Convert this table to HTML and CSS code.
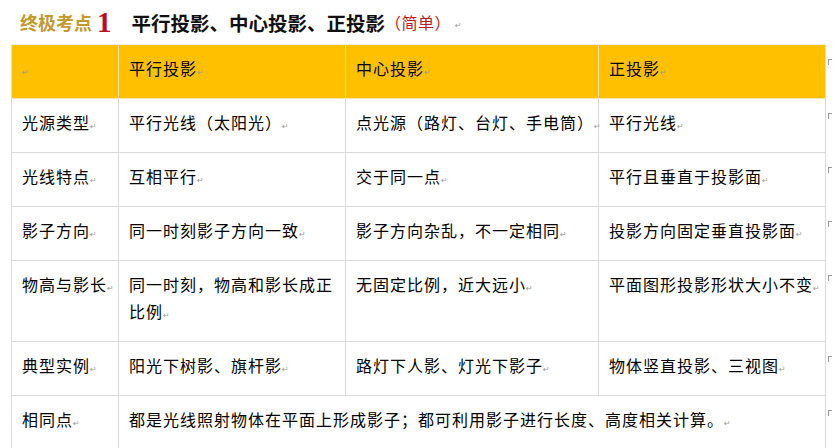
FILE: index.html
```html
<!DOCTYPE html>
<html lang="zh-CN">
<head>
<meta charset="utf-8">
<title>终极考点1 平行投影、中心投影、正投影</title>
<link rel="stylesheet" href="styles.css">
</head>
<body>
<div class="page">
  <h1 class="title">
    <span class="tag">终极考点</span><span class="num">1</span>
    <span class="main">平行投影、中心投影、正投影</span><span class="level">（简单）</span><span class="pm">↵</span>
  </h1>
  <table class="grid">
    <colgroup>
      <col class="c1"><col class="c2"><col class="c3"><col class="c4"><col class="c5">
    </colgroup>
    <thead>
      <tr class="head">
        <th><span class="pm">↵</span></th>
        <th>平行投影<span class="pm">↵</span></th>
        <th>中心投影<span class="pm">↵</span></th>
        <th>正投影<span class="pm">↵</span></th>
        <td class="end"><span class="em"></span></td>
      </tr>
    </thead>
    <tbody>
      <tr>
        <td>光源类型<span class="pm">↵</span></td>
        <td>平行光线（太阳光）<span class="pm">↵</span></td>
        <td>点光源（路灯、台灯、手电筒）<span class="pm">↵</span></td>
        <td>平行光线<span class="pm">↵</span></td>
        <td class="end"><span class="em"></span></td>
      </tr>
      <tr>
        <td>光线特点<span class="pm">↵</span></td>
        <td>互相平行<span class="pm">↵</span></td>
        <td>交于同一点<span class="pm">↵</span></td>
        <td>平行且垂直于投影面<span class="pm">↵</span></td>
        <td class="end"><span class="em"></span></td>
      </tr>
      <tr>
        <td>影子方向<span class="pm">↵</span></td>
        <td>同一时刻影子方向一致<span class="pm">↵</span></td>
        <td>影子方向杂乱，不一定相同<span class="pm">↵</span></td>
        <td>投影方向固定垂直投影面<span class="pm">↵</span></td>
        <td class="end"><span class="em"></span></td>
      </tr>
      <tr class="tall">
        <td>物高与影长<span class="pm">↵</span></td>
        <td class="wrap">同一时刻，物高和影长成正比例<span class="pm">↵</span></td>
        <td>无固定比例，近大远小<span class="pm">↵</span></td>
        <td>平面图形投影形状大小不变<span class="pm">↵</span></td>
        <td class="end"><span class="em"></span></td>
      </tr>
      <tr>
        <td>典型实例<span class="pm">↵</span></td>
        <td>阳光下树影、旗杆影<span class="pm">↵</span></td>
        <td>路灯下人影、灯光下影子<span class="pm">↵</span></td>
        <td>物体竖直投影、三视图<span class="pm">↵</span></td>
        <td class="end"><span class="em"></span></td>
      </tr>
      <tr class="last">
        <td>相同点<span class="pm">↵</span></td>
        <td colspan="3">都是光线照射物体在平面上形成影子；都可利用影子进行长度、高度相关计算。<span class="pm">↵</span></td>
        <td class="end"><span class="em"></span></td>
      </tr>
    </tbody>
  </table>
</div>
</body>
</html>
```

FILE: styles.css
```css
html, body {
  margin: 0;
  padding: 0;
  background: #ffffff;
}

.page {
  padding: 0 0 0 11px;
  font-family: "Noto Sans CJK SC", "Noto Sans", sans-serif;
  color: #000;
}

.title {
  margin: 0;
  height: 44px;
  display: flex;
  align-items: center;
  padding-left: 9px;
  font-weight: normal;
  white-space: nowrap;
}

.tag {
  font-size: 18px;
  font-weight: 700;
  color: #c4982b;
}

.num {
  font-family: "Liberation Serif", "DejaVu Serif", serif;
  font-size: 29px;
  font-weight: 700;
  color: #b8101e;
  margin-left: 5px;
  margin-right: 20px;
  line-height: 1;
}

.main {
  font-size: 19.5px;
  font-weight: 700;
  color: #111;
}

.level {
  font-size: 16px;
  color: #c0191c;
  letter-spacing: 0.5px;
}

.title .pm {
  margin-left: 4px;
  margin-right: 0;
  align-self: flex-end;
  margin-bottom: 14px;
  line-height: 1;
}

.pm {
  font-family: "DejaVu Sans", sans-serif;
  font-size: 8px;
  line-height: 0;
  color: #9a9a9a;
  letter-spacing: 0;
  font-weight: normal;
}

.grid {
  border-collapse: collapse;
  table-layout: fixed;
  width: 822px;
  font-size: 16px;
  letter-spacing: 1px;
}

.c1 { width: 107px; }
.c2 { width: 227px; }
.c3 { width: 253px; }
.c4 { width: 227px; }
.c5 { width: 8px; }

.grid tr {
  height: 54px;
}

.grid tr.tall {
  height: 81px;
}

.grid tr.last {
  height: 60px;
}

.grid th,
.grid td {
  border: 1px solid #dadada;
  padding: 10px 0 0 10px;
  line-height: 27px;
  text-align: left;
  vertical-align: top;
  font-weight: normal;
  white-space: nowrap;
  overflow: visible;
}

.grid td.wrap {
  white-space: normal;
  padding-right: 4px;
}

.grid .head th {
  background: #ffc000;
  border-color: #f3e2b0;
  border-top-color: #ececec;
}

.grid .last td {
  border-bottom: none;
}

.grid td.end {
  border: none;
  border-left: 1px solid #dde2e6;
  padding: 14px 0 0 2px;
  line-height: 1;
  background: none;
}

.em {
  display: block;
  width: 3px;
  height: 5px;
  border-top: 1px solid #9a9a9a;
  border-left: 1px solid #9a9a9a;
}
```
